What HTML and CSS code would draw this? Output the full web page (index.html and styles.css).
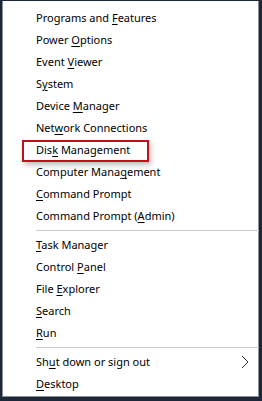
FILE: index.html
```html
<!DOCTYPE html>
<html lang="en">
<head>
  <meta charset="UTF-8" />
  <title>Quick Link Menu</title>
  <link rel="stylesheet" href="styles.css">
</head>
<body>
  <div class="menu">
    <div class="item">Programs and <u>F</u>eatures</div>
    <div class="item">Power <u>O</u>ptions</div>
    <div class="item">Event <u>V</u>iewer</div>
    <div class="item">S<u>y</u>stem</div>
    <div class="item">Device <u>M</u>anager</div>
    <div class="item">Net<u>w</u>ork Connections</div>
    <div class="item marked">Dis<u>k</u> Management<span class="callout"></span></div>
    <div class="item">Computer Mana<u>g</u>ement</div>
    <div class="item"><u>C</u>ommand Prompt</div>
    <div class="item">Command Prompt (<u>A</u>dmin)</div>
    <div class="sep"></div>
    <div class="item"><u>T</u>ask Manager</div>
    <div class="item">Control <u>P</u>anel</div>
    <div class="item">File <u>E</u>xplorer</div>
    <div class="item"><u>S</u>earch</div>
    <div class="item"><u>R</u>un</div>
    <div class="sep"></div>
    <div class="item has-sub">
      <span>Sh<u>u</u>t down or sign out</span>
      <svg class="chevron" width="8" height="14" viewBox="0 0 8 14">
        <path d="M1 1 L7 7 L1 13" fill="none" stroke="#2b2b3a" stroke-width="1" />
      </svg>
    </div>
    <div class="item"><u>D</u>esktop</div>
  </div>
</body>
</html>
```
FILE: styles.css
```css
* {
  box-sizing: border-box;
  margin: 0;
  padding: 0;
}
body {
  background: #ffffff;
  font-family: "Noto Sans", "Open Sans", sans-serif;
  font-size: 11px;
  color: #000000;
}
.menu {
  width: 262px;
  height: 401px;
  background: #ffffff;
  border-style: solid;
  border-color: #1c2838;
  border-width: 1px 3px 4px 2px;
  padding: 6px 0 0 0;
  box-shadow: inset 1px 0 0 #8a9099, inset -1px 0 0 #8a9099, inset 0 -1px 0 #8a9099;
}
.item {
  position: relative;
  height: 22px;
  line-height: 22px;
  padding-left: 34px;
  white-space: nowrap;
}
.item u {
  text-decoration-thickness: 1px;
  text-underline-offset: 2px;
}
.has-sub {
  display: flex;
  align-items: center;
  justify-content: space-between;
  padding-right: 10px;
}
.chevron {
  display: block;
}
.sep {
  height: 7px;
  padding-top: 3px;
  margin-left: 34px;
}
.sep::before {
  content: "";
  display: block;
  height: 1px;
  background: #cccccc;
}
/* red annotation box drawn over the Disk Management row */
.callout {
  position: absolute;
  left: 20px;
  top: 1px;
  width: 127px;
  height: 22px;
  border: 2px solid #c0101c;
  box-shadow: 2px 3px 5px rgba(0, 0, 0, 0.25);
}
```
